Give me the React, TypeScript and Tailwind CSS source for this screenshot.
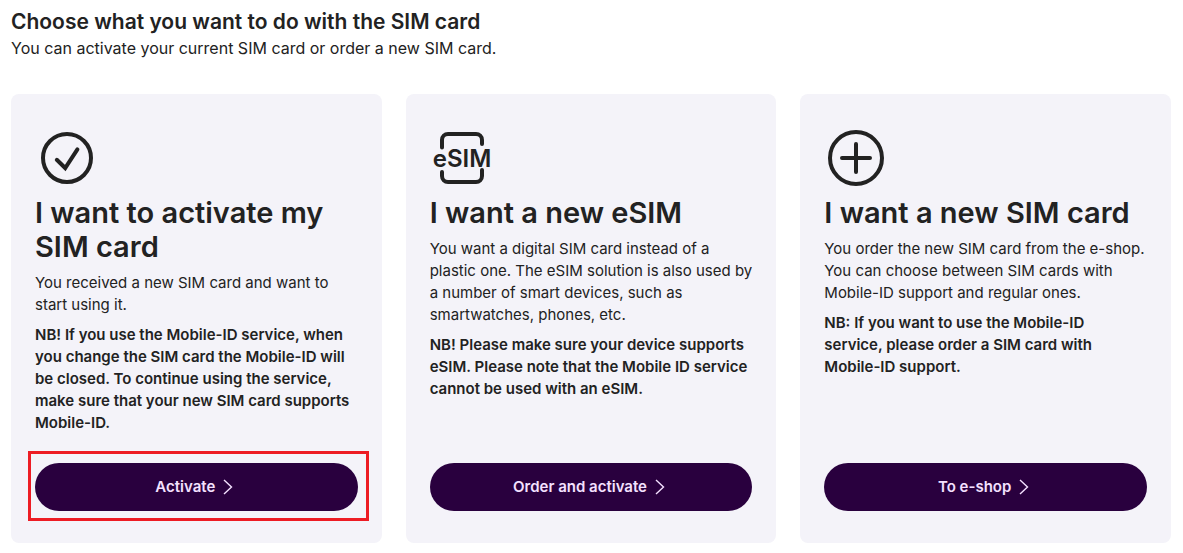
import type { ReactNode } from "react";
import clsx from "clsx";

type Option = {
	title: string;
	text: string;
	note: string;
	action: string;
	icon: ReactNode;
	highlighted?: boolean;
};

const iconProps = {
	viewBox: "0 0 64 64",
	className: "size-16",
	fill: "none",
	stroke: "currentColor",
	strokeWidth: 4,
	strokeLinecap: "round" as const,
	strokeLinejoin: "round" as const,
	"aria-hidden": true,
};

function CheckIcon() {
	return (
		<svg {...iconProps}>
			<circle cx="32" cy="32" r="24" />
			<path d="M21.8 33.8l8.4 8.2L42.4 23.4" strokeLinejoin="miter" />
		</svg>
	);
}

function EsimIcon() {
	return (
		<svg {...iconProps}>
			<path d="M12 21.5V14a6 6 0 0 1 6-6h28a6 6 0 0 1 6 6v4" />
			<path d="M12 46v4a6 6 0 0 0 6 6h28a6 6 0 0 0 6-6v-6" />
			<text
				x="32"
				y="41"
				textAnchor="middle"
				fill="currentColor"
				stroke="none"
				fontSize="24"
				fontWeight="600"
			>
				eSIM
			</text>
		</svg>
	);
}

function PlusIcon() {
	return (
		<svg {...iconProps}>
			<circle cx="32" cy="32" r="26" />
			<path d="M32 18v28M18 32h28" />
		</svg>
	);
}

function ChevronIcon() {
	return (
		<svg
			viewBox="0 0 14 16"
			className="h-4 w-[14px]"
			fill="none"
			stroke="currentColor"
			strokeWidth="1.4"
			aria-hidden
		>
			<path d="M1 1l7.5 7L1 15" />
		</svg>
	);
}

const options: Option[] = [
	{
		title: "I want to activate my SIM card",
		text: "You received a new SIM card and want to start using it.",
		note: "NB! If you use the Mobile-ID service, when you change the SIM card the Mobile-ID will be closed. To continue using the service, make sure that your new SIM card supports Mobile-ID.",
		action: "Activate",
		icon: <CheckIcon />,
		highlighted: true,
	},
	{
		title: "I want a new eSIM",
		text: "You want a digital SIM card instead of a plastic one. The eSIM solution is also used by a number of smart devices, such as smartwatches, phones, etc.",
		note: "NB! Please make sure your device supports eSIM. Please note that the Mobile ID service cannot be used with an eSIM.",
		action: "Order and activate",
		icon: <EsimIcon />,
	},
	{
		title: "I want a new SIM card",
		text: "You order the new SIM card from the e-shop. You can choose between SIM cards with Mobile-ID support and regular ones.",
		note: "NB: If you want to use the Mobile-ID service, please order a SIM card with Mobile-ID support.",
		action: "To e-shop",
		icon: <PlusIcon />,
	},
];

function OptionCard({ title, text, note, action, icon, highlighted }: Option) {
	return (
		<article className="flex flex-col rounded-lg bg-[#f4f3f9] px-6 py-8">
			{icon}
			<h2 className="mt-[6px] text-[29px] leading-[34px] font-semibold">{title}</h2>
			<p className="mt-2 text-[15px] leading-[22px]">{text}</p>
			<p className="mt-2 pr-[3px] text-[15px] leading-[22px] font-semibold">{note}</p>
			<div className="mt-auto pt-[29px]">
				<div className="relative">
					<button
						type="button"
						className="flex h-12 w-full items-center justify-center gap-2 rounded-full bg-[#29003e] text-[15px] font-semibold text-[#f4e0ff]"
					>
						{action}
						<ChevronIcon />
					</button>
					<span
						className={clsx(
							"pointer-events-none absolute -top-3 -right-[11px] -bottom-[10px] -left-[7px] border-3 border-[#ed1c24]",
							!highlighted && "hidden",
						)}
					/>
				</div>
			</div>
		</article>
	);
}

export default function App() {
	return (
		<main className="bg-white pt-2 pr-3 pb-[10px] pl-[11px] font-['Inter',sans-serif] text-[#222]">
			<h1 className="text-[21px] leading-7 font-semibold">
				Choose what you want to do with the SIM card
			</h1>
			<p className="text-base leading-6">
				You can activate your current SIM card or order a new SIM card.
			</p>
			<div className="mt-[34px] grid grid-cols-3 gap-6">
				{options.map((option) => (
					<OptionCard key={option.title} {...option} />
				))}
			</div>
		</main>
	);
}
